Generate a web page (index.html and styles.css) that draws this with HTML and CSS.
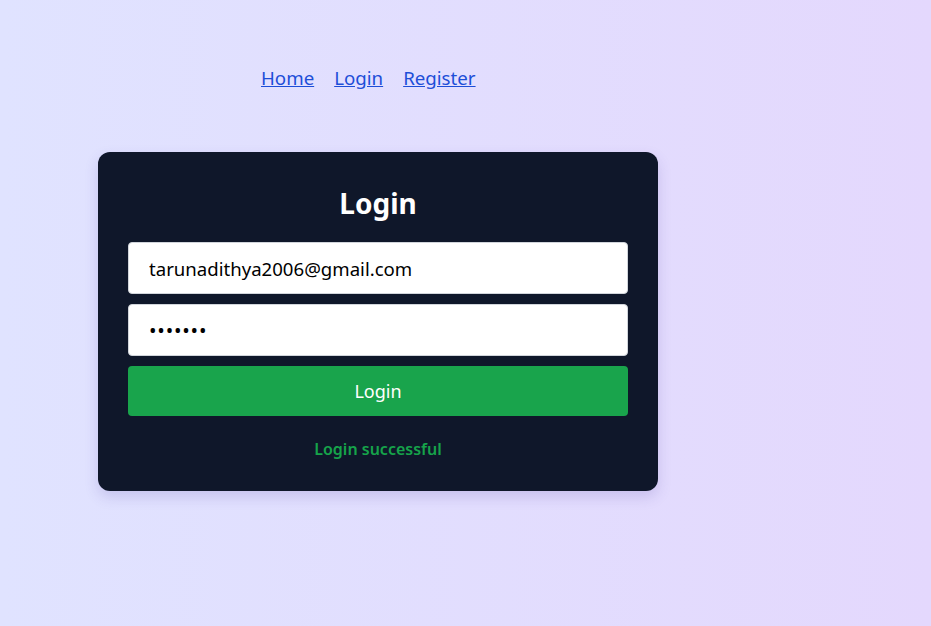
FILE: index.html
```html
<!DOCTYPE html>
<html lang="en">
<head>
<meta charset="utf-8">
<title>Login</title>
<link rel="stylesheet" href="styles.css">
</head>
<body>
<div class="page">
  <nav class="nav">
    <a href="#">Home</a>
    <a href="#">Login</a>
    <a href="#">Register</a>
  </nav>
  <div class="card">
    <h2 class="title">Login</h2>
    <form class="form">
      <input class="field" type="email" value="tarunadithya2006@gmail.com">
      <input class="field pw" type="password" value="1234567">
      <button class="btn" type="button">Login</button>
    </form>
    <p class="msg">Login successful</p>
  </div>
</div>
</body>
</html>
```
FILE: styles.css
```css
html, body {
  margin: 0;
  height: 100%;
}
body {
  background: linear-gradient(to right, #e0e3ff, #e4d8fd);
  font-family: "Noto Sans", "Open Sans", sans-serif;
}
.page {
  padding-top: 64px;
  padding-left: 98px;
}
.nav {
  display: flex;
  gap: 20px;
  padding-left: 163px;
  font-size: 18.7px;
  line-height: 28px;
}
.nav a {
  color: #1d4ed8;
}
.card {
  margin-top: 60px;
  width: 500px;
  padding: 29px 30px 30px;
  background: #0f172a;
  border-radius: 12px;
  box-shadow: 0 6px 14px rgba(80, 60, 160, 0.18);
}
.title {
  margin: 0 0 17px;
  text-align: center;
  color: #fff;
  font-size: 28px;
  font-weight: 700;
  line-height: 44px;
}
.form {
  display: flex;
  flex-direction: column;
  gap: 10px;
}
.field {
  box-sizing: border-box;
  height: 52px;
  width: 100%;
  border: 1px solid #d1d5db;
  border-radius: 4px;
  padding: 0 20px;
  font-family: inherit;
  font-size: 18.6px;
  color: #000;
  background: #fff;
  outline: none;
}
.pw {
  letter-spacing: 0.8px;
  font-size: 20px;
}
.btn {
  height: 50px;
  border: none;
  border-radius: 4px;
  background: #19a44c;
  color: #fff;
  font-family: inherit;
  font-size: 18px;
  cursor: pointer;
}
.msg {
  margin: 21px 0 0;
  text-align: center;
  color: #16a34a;
  font-size: 16px;
  font-weight: 600;
  line-height: 24px;
}
```
